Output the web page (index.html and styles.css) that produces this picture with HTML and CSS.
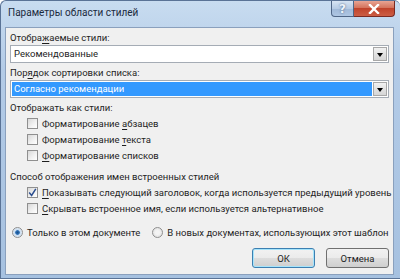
FILE: index.html
```html
<!DOCTYPE html>
<html lang="ru">
<head>
    <meta charset="UTF-8">
    <title>Параметры области стилей</title>
    <link rel="stylesheet" href="styles.css">
</head>
<body>

<div class="window">
    <div class="titlebar">
        <span class="title">Параметры области стилей</span>
        <div class="caption-buttons">
            <button class="cap help">?</button>
            <button class="cap close">
                <svg width="12" height="10" viewBox="0 0 12 10"><path d="M2 1 L10 9 M10 1 L2 9" stroke="#fff" stroke-width="2.4" stroke-linecap="square"/></svg>
            </button>
        </div>
    </div>

    <div class="panel">
        <div class="label">Отобра<u>ж</u>аемые стили:</div>
        <div class="combo">
            <span class="combo-text">Рекомендованные</span>
            <span class="combo-arrow"></span>
        </div>

        <div class="label">Пор<u>я</u>док сортировки списка:</div>
        <div class="combo">
            <span class="combo-text selected">Согласно рекомендации</span>
            <span class="combo-arrow"></span>
        </div>

        <div class="label">Отображать как стили:</div>
        <div class="checks">
            <div class="check"><span class="box"></span><span>Форматирование <u>а</u>бзацев</span></div>
            <div class="check"><span class="box"></span><span>Форматирование <u>т</u>екста</span></div>
            <div class="check"><span class="box"></span><span><u>Ф</u>орматирование списков</span></div>
        </div>

        <div class="label section">Способ отображения имен встроенных стилей</div>
        <div class="checks">
            <div class="check"><span class="box"><svg width="9" height="9" viewBox="0 0 9 9"><path d="M1.2 4.6 L3.6 7.4 L7.8 0.8" fill="none" stroke="#2a4d8f" stroke-width="1.5"/></svg></span><span><u>П</u>оказывать следующий заголовок, когда используется предыдущий уровень</span></div>
            <div class="check"><span class="box"></span><span><u>С</u>крывать встроенное имя, если используется альтернативное</span></div>
        </div>

        <div class="radios">
            <div class="radio"><span class="dot on"></span><span>Только в этом документе</span></div>
            <div class="radio"><span class="dot"></span><span>В новых документах, использующих этот шаблон</span></div>
        </div>

        <div class="buttons">
            <button class="btn default">ОК</button>
            <button class="btn">Отмена</button>
        </div>
    </div>
</div>

</body>
</html>
```

FILE: styles.css
```css
body {
    margin: 0;
    padding: 0;
    font-family: 'Roboto', sans-serif;
    font-size: 9.5px;
    color: #1e1e1e;
    white-space: nowrap;
}
.window {
    width: 400px;
    height: 279px;
    display: flex;
    flex-direction: column;
    background: linear-gradient(to bottom, #c8dcf0 0%, #b3cbe7 25%, #a6c1e0 100%);
    box-sizing: border-box;
    border: 1px solid #5a7396;
    border-right: none;
    border-radius: 6px 6px 0 0;
}
.titlebar {
    height: 26px;
    display: flex;
    align-items: flex-start;
    flex-shrink: 0;
}
.title {
    font-size: 10px;
    padding: 6px 0 0 7px;
    color: #1b2a3d;
}
.caption-buttons {
    margin-left: auto;
    margin-right: 5px;
    display: flex;
}
.cap {
    height: 16px;
    border: 1px solid #4f6686;
    border-top: none;
    padding: 0;
    display: flex;
    align-items: center;
    justify-content: center;
    font-family: 'DejaVu Sans', sans-serif;
    font-weight: bold;
    font-size: 12px;
}
.help {
    width: 23px;
    border-radius: 0 0 0 4px;
    background: linear-gradient(to bottom, #d7e4f3 0%, #b6cbe4 50%, #9fb8d8 51%, #aec6e3 100%);
    color: #eef4fb;
    text-shadow: 0 0 2px #3d5478;
}
.close {
    width: 41px;
    border-left: none;
    border-radius: 0 0 4px 0;
    border-color: #7a2a22;
    background: linear-gradient(to bottom, #e8a493 0%, #d4735c 45%, #c0432b 50%, #cc5e45 100%);
}
.panel {
    flex: 1;
    margin: 0 6px 3px 4px;
    background: #f0f0f0;
    border: 1px solid #8aa0bd;
    padding: 0 4px 0 4px;
    display: flex;
    flex-direction: column;
}
.label {
    height: 14px;
    line-height: 14px;
    margin-top: 3px;
}
.label.section {
    margin-top: 7px;
}
u {
    text-decoration-thickness: 1px;
    text-underline-offset: 2px;
}
.combo {
    height: 18px;
    box-sizing: border-box;
    border: 1px solid #a5acb5;
    background: #fff;
    display: flex;
    align-items: stretch;
    padding: 1px;
}
.combo-text {
    flex: 1;
    padding-left: 2px;
    line-height: 14px;
}
.combo-text.selected {
    background: #3399ff;
    color: #fff;
}
.combo-arrow {
    width: 12px;
    margin-left: 1px;
    border: 1px solid #a8a8a8;
    background: linear-gradient(to bottom, #f2f2f2 0%, #e2e2e2 50%, #d6d6d6 100%);
    position: relative;
}
.combo-arrow::after {
    content: '';
    position: absolute;
    left: 3px;
    top: 5px;
    border-left: 3px solid transparent;
    border-right: 3px solid transparent;
    border-top: 4px solid #000;
}
.checks {
    display: flex;
    flex-direction: column;
    padding-left: 17px;
}
.check {
    height: 16px;
    display: flex;
    align-items: center;
}
.box {
    width: 9px;
    height: 9px;
    border: 1px solid #8f8f8f;
    background: linear-gradient(135deg, #d8d8d8 0%, #f2f2f2 60%, #fff 100%);
    margin-right: 4px;
    display: flex;
    align-items: center;
    justify-content: center;
    flex-shrink: 0;
}
.radios {
    display: flex;
    gap: 12px;
    margin-top: 8px;
    height: 16px;
    padding-left: 2px;
}
.radio {
    display: flex;
    align-items: center;
}
.dot {
    width: 9px;
    height: 9px;
    border: 1px solid #8f8f8f;
    border-radius: 50%;
    background: radial-gradient(circle, #f4f4f4 30%, #d8d8d8 100%);
    margin-right: 4px;
}
.dot.on {
    background: radial-gradient(circle, #1a4e8a 0%, #2a6fb5 30%, #c9dcf0 42%, #eef3f8 100%);
}
.buttons {
    display: flex;
    justify-content: flex-end;
    gap: 11px;
    margin-top: 8px;
}
.btn {
    width: 63px;
    height: 20px;
    font-family: 'Roboto', sans-serif;
    font-size: 9.5px;
    color: #1e1e1e;
    border: 1px solid #707070;
    border-radius: 3px;
    background: linear-gradient(to bottom, #f2f2f2 0%, #ebebeb 50%, #dddddd 51%, #cfcfcf 100%);
    padding: 0;
}
.btn.default {
    border-color: #3c7fb1;
    box-shadow: inset 0 0 0 1px #a6e4fb;
}
```
